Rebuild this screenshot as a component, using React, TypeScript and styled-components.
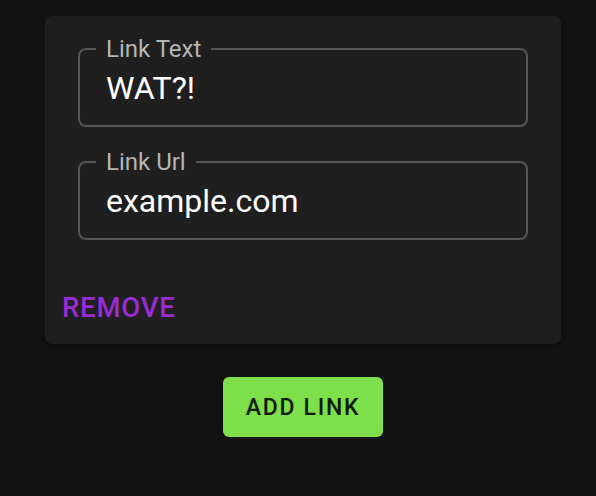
import styled, { createGlobalStyle } from "styled-components";

const GlobalStyle = createGlobalStyle`
  html, body {
    margin: 0;
    padding: 0;
    background: #121212;
  }
  body {
    font-family: Roboto, "Liberation Sans", sans-serif;
    color: #fff;
  }
`;

const Page = styled.div`
  width: 516px;
  padding: 16px 0 0 45px;
  display: flex;
  flex-direction: column;
  align-items: center;
`;

const Card = styled.div`
  width: 100%;
  height: 328px;
  box-sizing: border-box;
  background: #1f1f1f;
  border-radius: 7px;
  box-shadow: 0 2px 2px -1px rgba(0, 0, 0, 0.2), 0 1px 3px 0 rgba(0, 0, 0, 0.14);
  display: flex;
  flex-direction: column;
  justify-content: space-between;
`;

const Content = styled.div`
  padding: 19px 33px 0;
  display: flex;
  flex-direction: column;
  gap: 21px;
`;

const Field = styled.fieldset`
  margin: 0;
  padding: 0 26px 17px;
  border: 2px solid #575757;
  border-radius: 8px;
  min-width: 0;
`;

const Label = styled.legend`
  margin-left: -10px;
  padding: 0 10px;
  font-size: 24px;
  line-height: 28px;
  color: #b5b5b5;
`;

const Input = styled.input`
  display: block;
  width: 100%;
  height: 40px;
  margin-top: 5px;
  padding: 0;
  border: none;
  outline: none;
  background: transparent;
  font-family: Roboto, "Liberation Sans", sans-serif;
  font-size: 32px;
  line-height: 40px;
  color: #fff;
`;

const Actions = styled.div`
  padding: 0 17px 20px;
  display: flex;
`;

const TextButton = styled.button`
  padding: 0;
  border: none;
  background: none;
  font-family: Roboto, "Liberation Sans", sans-serif;
  font-weight: 500;
  font-size: 27.5px;
  line-height: 32px;
  letter-spacing: 0.8px;
  text-transform: uppercase;
  color: #9b2bd5;
  cursor: pointer;
`;

const AddButton = styled.button`
  margin-top: 33px;
  width: 160px;
  height: 60px;
  border: none;
  border-radius: 6px;
  background: #7ddf4a;
  box-shadow: 0 3px 1px -2px rgba(0, 0, 0, 0.2), 0 2px 2px 0 rgba(0, 0, 0, 0.14);
  font-family: Roboto, "Liberation Sans", sans-serif;
  font-weight: 500;
  font-size: 23px;
  letter-spacing: 1.7px;
  text-transform: uppercase;
  color: #101a0b;
  cursor: pointer;
`;

const links = [
  { label: "Link Text", value: "WAT?!" },
  { label: "Link Url", value: "example.com" },
];

export default function App() {
  return (
    <>
      <GlobalStyle />
      <Page>
        <Card>
          <Content>
            {links.map((l) => (
              <Field key={l.label}>
                <Label>{l.label}</Label>
                <Input defaultValue={l.value} />
              </Field>
            ))}
          </Content>
          <Actions>
            <TextButton type="button">Remove</TextButton>
          </Actions>
        </Card>
        <AddButton type="button">Add Link</AddButton>
      </Page>
    </>
  );
}
